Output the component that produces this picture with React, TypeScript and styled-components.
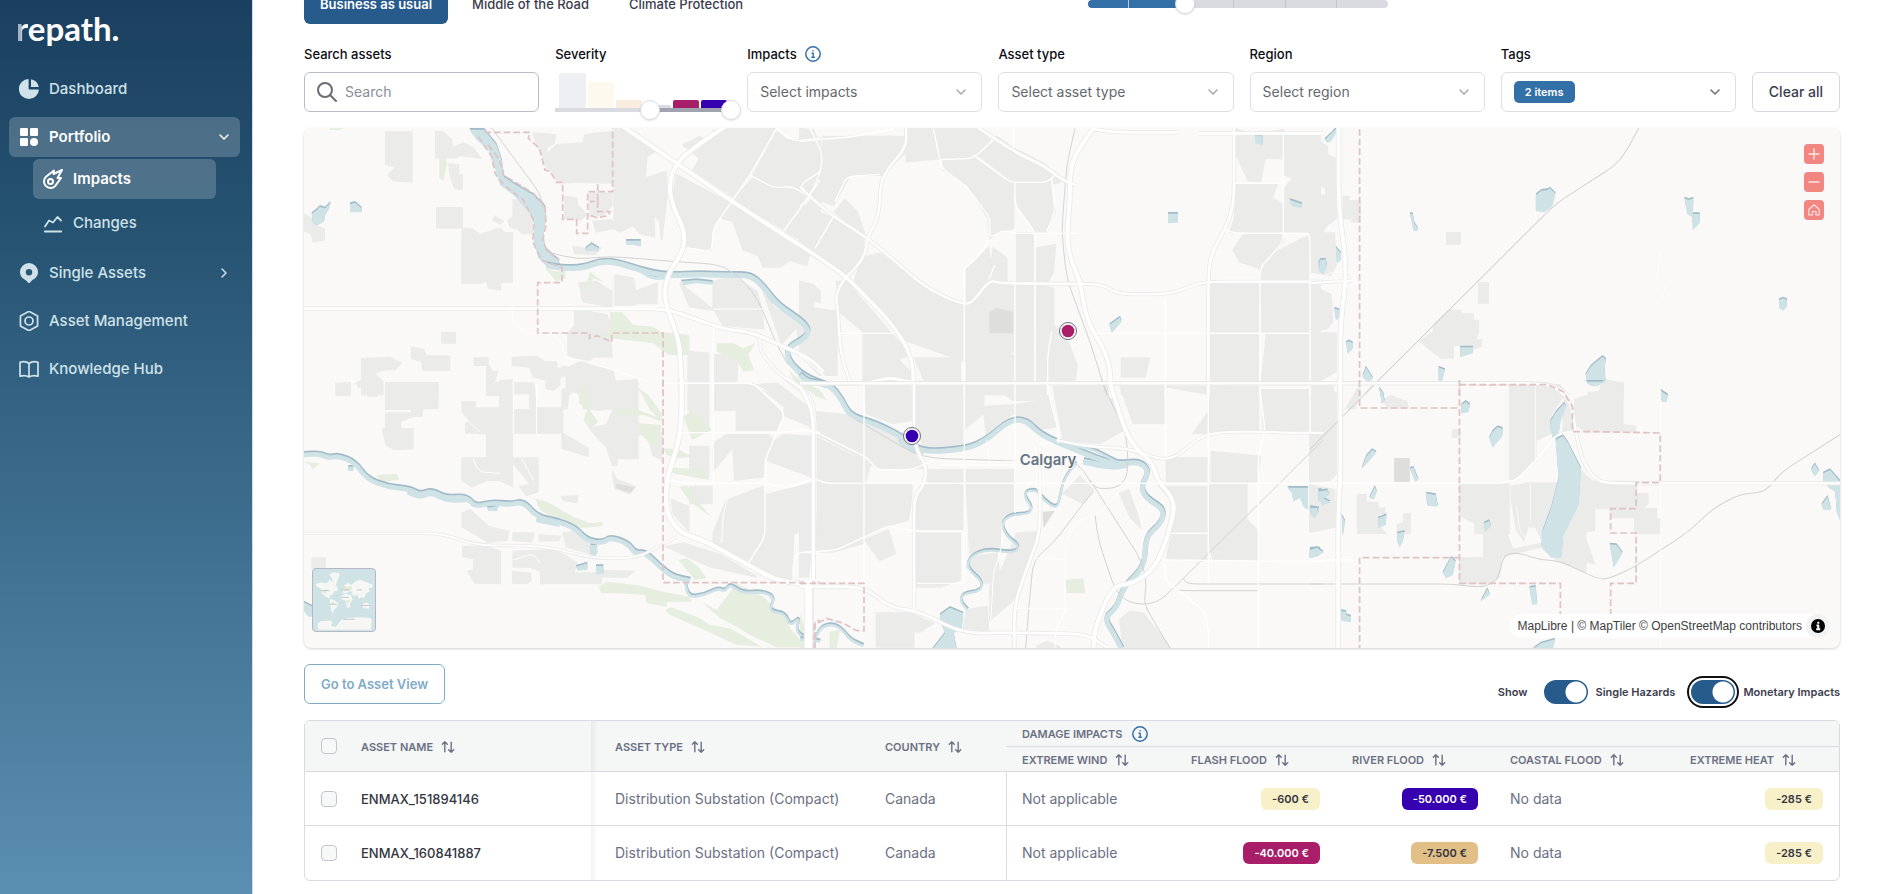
import React from 'react';
import styled, { createGlobalStyle, css } from 'styled-components';

/* ---------- global ---------- */

const GlobalStyle = createGlobalStyle`
  *, *::before, *::after { box-sizing: border-box; }
  body {
    margin: 0;
    background: #fff;
    color: #3b3d4d;
    font-family: Inter, "Liberation Sans", sans-serif;
    font-size: 14px;
    line-height: 20px;
    overflow-x: hidden;
  }
  button, input, select { font: inherit; color: inherit; margin: 0; }
`;

const Page = styled.div`
  display: flex;
  min-height: 100vh;
`;

/* ---------- sidebar ---------- */

const Sidebar = styled.aside`
  flex: 0 0 253px;
  padding: 12px 12px 0 9px;
  border-right: 1px solid #d5d9e0;
  background: linear-gradient(#1b3f60, #24506f 22%, #5b8fb2);
`;

const Logo = styled.a`
  display: block;
  height: 36px;
  margin-bottom: 21px;
  padding-left: 7px;
  color: #fff;
  font-family: Lato, sans-serif;
  font-weight: 700;
  font-size: 33px;
  line-height: 32px;
  text-decoration: none;
`;

const LogoLead = styled.span`
  background: linear-gradient(90deg, rgba(255, 255, 255, 0.6) 40%, #fff 60%);
  background-clip: text;
  -webkit-background-clip: text;
  color: transparent;
`;

const NavList = styled.ul`
  list-style: none;
  margin: 0;
  padding: 0;
  display: flex;
  flex-direction: column;
  gap: 8px;
`;

const SubList = styled(NavList)`
  margin: 2px 24px;
  gap: 4px;
`;

const NavLink = styled.a<{ $active?: boolean }>`
  display: flex;
  align-items: center;
  gap: 10px;
  height: 40px;
  padding: 0 10px;
  border-radius: 6px;
  color: #cfe2e9;
  font-size: 15px;
  font-weight: 500;
  text-decoration: none;
  ${(p) =>
    p.$active &&
    css`
      background: rgba(255, 255, 255, 0.2);
      color: #fff;
      font-weight: 600;
    `}
`;

const NavText = styled.span`
  flex: 1;
`;

/* ---------- icons ---------- */

const Glyph = styled.svg<{ $size?: number }>`
  flex: none;
  display: block;
  width: ${(p) => p.$size ?? 20}px;
  height: ${(p) => p.$size ?? 20}px;
  fill: none;
  stroke: currentColor;
  stroke-width: 2;
  stroke-linecap: round;
  stroke-linejoin: round;
`;

const PieIcon = () => (
  <Glyph viewBox="0 0 20 20">
    <path fill="currentColor" stroke="none" d="M12 0.2A10 10 0 0 1 19.8 8H12Z" />
    <path fill="currentColor" stroke="none" d="M9.6 0A10 10 0 1 0 19.9 10.4H10.6a1 1 0 0 1-1-1Z" />
  </Glyph>
);

const GridIcon = () => (
  <Glyph viewBox="0 0 20 20">
    <g fill="currentColor" stroke="none">
      <rect x="1" y="1" width="8" height="8" rx="1.2" />
      <rect x="11" y="1" width="8" height="8" rx="1.2" />
      <rect x="1" y="11" width="8" height="8" rx="1.2" />
      <circle cx="15" cy="15" r="4" />
    </g>
  </Glyph>
);

const MeteorIcon = () => (
  <Glyph viewBox="2 2 20 20">
    <path d="M21 3l-4.500 8h3.500l-5.891 8.086a6.5 6.5 0 1 1-8.855-9.506L13 3.500l-.5 3.500z" />
    <circle cx="9.5" cy="14.5" r="2.5" />
  </Glyph>
);

const TrendIcon = () => (
  <Glyph viewBox="2 2 20 20">
    <path strokeWidth="1.800" d="M3.800 20.500h16.400M4 15.500l4-6 4 2 4.500-5.500 3.500 3.500" />
  </Glyph>
);

const PinIcon = () => (
  <Glyph viewBox="0 0 20 20">
    <path
      fill="currentColor"
      stroke="none"
      fillRule="evenodd"
      d="M10 0a9 9 0 0 1 9 9c0 4-2.6 6.500-5.800 8.200L10 20.500l-3.200-3.300C3.600 15.500 1 13 1 9a9 9 0 0 1 9-9Zm0 6a3.200 3.200 0 1 0 0 6.400A3.200 3.200 0 0 0 10 6Z"
    />
  </Glyph>
);

const HexIcon = () => (
  <Glyph viewBox="-0.500 -0.500 21 21">
    <path strokeWidth="1.8" d="M10-.2l9 4.900v10.600l-9 4.900-9-4.900V4.700z" />
    <circle strokeWidth="1.8" cx="10" cy="10" r="4.200" />
  </Glyph>
);

const BookIcon = () => (
  <Glyph viewBox="0 0 20 20">
    <path strokeWidth="1.7" d="M10 4.500C8 2.700 4 2.300 1 3.200v14c3-.9 7-.5 9 .8 2-1.300 6-1.700 9-.8v-14c-3-.9-7-.5-9 1.300ZM10 4.500V18" />
  </Glyph>
);

const Chevron = ({ to = 'down' }: { to?: 'down' | 'right' }) => (
  <Glyph $size={12} viewBox="0 0 12 12">
    <path strokeWidth="1.500" d={to === 'down' ? 'M2 4l4 4 4-4' : 'M4 2l4 4-4 4'} />
  </Glyph>
);

const InfoGlyph = styled(Glyph)`
  color: #3470a8;
`;

const InfoIcon = () => (
  <InfoGlyph $size={16} viewBox="0 0 16 16" role="img" aria-label="Info">
    <circle strokeWidth="1.500" cx="8" cy="8" r="7.200" />
    <path strokeWidth="1.400" d="M7 7.200h1.200V11M6.800 11.300h2.600M8 4.600v.3" />
  </InfoGlyph>
);

const SortIcon = () => (
  <Glyph $size={14} viewBox="0 0 14 14">
    <path strokeWidth="1.400" d="M3.800 11.800V1.700M1.300 4.200l2.500-2.500 2.500 2.500M10.200 2.200v10.100M7.700 9.800l2.500 2.500 2.500-2.500" />
  </Glyph>
);

/* ---------- scenario row ---------- */

const Main = styled.main`
  flex: 1;
  min-width: 0;
  padding: 0 44px 12px 51px;
`;

const ScenarioRow = styled.div`
  display: grid;
  grid-template-columns: 784px 1fr;
  align-items: end;
  height: 24px;
`;

const Tabs = styled.div`
  display: flex;
  align-items: flex-end;
  gap: 8px;
  height: 24px;
`;

const Tab = styled.button<{ $active?: boolean }>`
  flex: none;
  height: 40px;
  padding: 0 16px;
  border: 0;
  border-radius: 6px;
  background: ${(p) => (p.$active ? '#275b8b' : 'transparent')};
  color: ${(p) => (p.$active ? '#fff' : '#3b3d4d')};
  font-weight: ${(p) => (p.$active ? 600 : 500)};
  font-size: 13px;
`;

const thumb = css`
  appearance: none;
  pointer-events: auto;
  width: 20px;
  height: 20px;
  border: 1px solid #dcdee3;
  border-radius: 50%;
  background: #fff;
  box-shadow: 0 1px 2px rgba(0, 0, 0, 0.12);
`;

const YearSlider = styled.input`
  appearance: none;
  align-self: start;
  width: 300px;
  height: 8px;
  background:
    linear-gradient(#c3c6cd, #c3c6cd) 40px 0 / 1px 8px no-repeat,
    linear-gradient(#c3c6cd, #c3c6cd) 145px 0 / 1px 8px no-repeat,
    linear-gradient(#c3c6cd, #c3c6cd) 197px 0 / 1px 8px no-repeat,
    linear-gradient(#c3c6cd, #c3c6cd) 248px 0 / 1px 8px no-repeat,
    linear-gradient(#3470a8, #3470a8) 0 0 / 97px 8px no-repeat,
    linear-gradient(#d9dbe0, #d9dbe0);
  border-radius: 4px;
  &::-webkit-slider-thumb { ${thumb} }
`;

/* ---------- filters ---------- */

const Filters = styled.form`
  display: grid;
  grid-template-columns: 1fr 176px repeat(4, 1fr) 88px;
  gap: 16px;
  align-items: end;
  margin: 20px 0 16px;
`;

const Field = styled.div`
  display: flex;
  flex-direction: column;
  gap: 8px;
  min-width: 0;
`;

const FieldLabel = styled.label`
  display: flex;
  align-items: center;
  gap: 8px;
  color: #0c0d12;
  font-size: 13px;
  font-weight: 500;
`;

const Control = styled.div<{ $strong?: boolean; $muted?: boolean }>`
  display: flex;
  align-items: center;
  position: relative;
  height: 40px;
  padding: 0 14px 0 12px;
  gap: 8px;
  border: 1px solid ${(p) => (p.$strong ? '#b9bbc8' : '#dedfe3')};
  border-radius: 6px;
  background: #fff;
  color: ${(p) => (p.$muted ? '#a6a8ad' : '#6b6d73')};
`;

const SearchInput = styled.input`
  flex: 1;
  min-width: 0;
  border: 0;
  outline: 0;
  padding: 0;
  background: none;
  font-size: 14px;
  &::placeholder { color: #8a8d9a; }
`;

const Select = styled.select`
  appearance: none;
  flex: 1;
  min-width: 0;
  height: 38px;
  border: 0;
  padding: 0;
  background: none;
  color: #66686e;
  font-size: 14px;
`;

const MultiSelect = styled.button`
  display: flex;
  align-items: center;
  justify-content: space-between;
  height: 40px;
  padding: 0 14px 0 12px;
  border: 1px solid #dedfe3;
  border-radius: 6px;
  background: #fff;
  color: #6b6d73;
`;

const Chip = styled.span`
  height: 22px;
  padding: 0 11px;
  border-radius: 5px;
  background: #3470a8;
  color: #fff;
  font-size: 11px;
  font-weight: 600;
  line-height: 22px;
`;

const OutlineButton = styled.button<{ $accent?: boolean }>`
  height: 40px;
  padding: 0 ${(p) => (p.$accent ? 16 : 0)}px;
  border: 1px solid ${(p) => (p.$accent ? '#7fabc6' : '#d6d8de')};
  border-radius: 6px;
  background: #fff;
  color: ${(p) => (p.$accent ? '#7fabc6' : '#3b3d4d')};
  font-size: ${(p) => (p.$accent ? 13 : 14)}px;
  font-weight: ${(p) => (p.$accent ? 600 : 500)};
  white-space: nowrap;
`;

const Histogram = styled.div`
  position: relative;
  display: grid;
  grid-template-columns: repeat(6, 1fr);
  gap: 2px;
  align-items: end;
  height: 40px;
  padding: 0 4px 4px;
  background:
    linear-gradient(#a0a4ae, #a0a4ae) 94px 36px / 82px 4px no-repeat,
    linear-gradient(#d9dbe0, #d9dbe0) 0 36px / 176px 4px no-repeat;
`;

const Bar = styled.div<{ $h: number; $c: string }>`
  height: ${(p) => p.$h}px;
  border-radius: 2px 2px 0 0;
  background: ${(p) => p.$c};
`;

const SeverityRange = styled.input`
  appearance: none;
  position: absolute;
  left: -10px;
  bottom: -8px;
  width: 196px;
  height: 20px;
  background: none;
  pointer-events: none;
  &::-webkit-slider-thumb { ${thumb} }
`;

/* ---------- map ---------- */

const MapCard = styled.section`
  position: relative;
  height: 520px;
  border-radius: 8px;
  overflow: hidden;
  background: #faf9f7;
  box-shadow: 0 1px 3px rgba(0, 0, 0, 0.18);
`;

const MapSvg = styled.svg`
  display: block;
  width: 100%;
  height: 100%;
  .land { fill: #ebebea; stroke: #ebebea; stroke-width: 6; stroke-linejoin: miter; }
  .dark { fill: #dededd; }
  .park { fill: #e6eedf; }
  .lakeEdge { fill: #a2bbc8; }
  .lake { fill: #cfe2e6; }
  .riverEdge { fill: none; stroke: #a2bbc8; stroke-linejoin: round; }
  .river { fill: none; stroke: #cfe2e6; stroke-linejoin: round; }
  .casing { fill: none; stroke: #e9e9e8; stroke-linejoin: round; }
  .road { fill: none; stroke: #fff; stroke-linejoin: round; }
  .rail { fill: none; stroke: #d3d3d2; stroke-width: 3; stroke-linejoin: round; }
  .border { fill: none; stroke: #dfc3c5; stroke-width: 5; stroke-dasharray: 20 9; }
`;

const CityLabel = styled.text`
  font: 600 15px Inter, sans-serif;
  fill: #657584;
  stroke: #fbfaf8;
  stroke-width: 2px;
  paint-order: stroke;
`;

const MapTools = styled.div`
  position: absolute;
  top: 16px;
  right: 16px;
  display: grid;
  gap: 8px;
`;

const MapTool = styled.button`
  display: grid;
  place-items: center;
  width: 20px;
  height: 20px;
  padding: 0;
  border: 0;
  border-radius: 4px;
  background: #f28681;
  color: #fde4e2;
`;

const MiniMap = styled.button`
  position: absolute;
  left: 8px;
  bottom: 16px;
  width: 64px;
  height: 64px;
  padding: 0;
  border: 1px solid #b3b7c6;
  border-radius: 4px;
  background: #cfe2e6;
  overflow: hidden;
`;

const Attribution = styled.div`
  position: absolute;
  right: 10px;
  bottom: 10px;
  display: flex;
  align-items: center;
  height: 24px;
  border-radius: 12px;
  padding-left: 8px;
  gap: 4px;
  background: #fff;
  color: #404040;
  font: 12px "Liberation Sans", Arial, sans-serif;
  a { color: inherit; text-decoration: none; }
`;

const InfoToggle = styled.button`
  display: grid;
  place-items: center;
  width: 24px;
  height: 24px;
  padding: 0;
  border: 0;
  border-radius: 50%;
  background: #f2f2f2;
`;

type Line = [string, number];
interface Tile {
  x: number;
  y: number;
  w: number;
  land: string;
  dark?: string;
  park?: string;
  lakes: string;
  rivers: Line[];
  roads: Line[];
  rails: string;
  borders: string;
}

const tiles: Tile[] = [
  {
    x: 300, y: 125, w: 1560,
    land:
      'M258 22H335V170L280 166 265 150 290 125 258 118ZM408 20L430 22 455 45V70L490 55 520 70 540 98 480 90 462 98 408 97ZM448 118L475 120V150L486 152V193L465 190 452 155ZM411 249H486V308H411ZM487 310L515 312 540 330 570 320 600 310 612 324H636V470L600 472V493L565 488 560 465 545 473H487ZM12 268L40 285 45 302 72 312V345L40 350 35 325 12 318ZM640 225L665 230 690 255 700 325 665 325 640 295ZM585 275L608 290 600 296 580 285ZM625 285L645 275 650 310 630 305ZM700 25L765 30 762 55 740 65V90L770 60 850 55 855 30 938 20V173L830 170 790 173 770 165 755 135 735 120 730 95 712 60ZM943 10H985L1110 95 1070 75 1040 95 1035 160 1098 140 1100 210 1085 345 1080 290 1060 265 1063 335 1020 325 1000 300 960 320 943 310ZM1150 60L1200 35 1215 50 1245 30 1240 18 1280 12H1425L1350 150 1300 215 1180 135 1200 100ZM1430 20L1460 45 1520 45 1560 40V175L1520 220 1380 180 1360 150ZM1530 230L1560 200V370L1450 318ZM1360 160L1430 195 1500 200 1515 230 1450 312 1300 222ZM1130 150L1290 235 1240 300 1232 375 1160 365 1150 300 1115 240ZM1250 270L1290 240 1450 325 1530 380 1520 420 1470 405 1440 425 1390 425 1375 390 1330 375 1300 290 1270 280ZM795 215L830 220 832 240 860 270 840 285 795 280ZM868 205H935V240L910 270 870 275ZM880 290L935 285 940 310 890 320ZM820 365L860 372 900 370 885 388 825 385ZM805 625L825 600V560L850 558 920 570 930 600 935 695H880L860 710 805 690ZM838 475L890 470 935 500V545L850 530ZM940 450L1000 460 1005 500 1070 475V535L1010 535 985 545 940 540ZM1140 475L1240 555 1170 545ZM1240 470L1300 455 1370 500 1385 550 1390 610 1270 600 1240 550ZM1390 500L1425 550 1500 595 1445 655ZM1500 490L1540 480 1560 500V530L1510 520ZM426 623H465V653H426ZM186 702L270 698 302 715 285 732 245 735 220 745 248 770V808H186V775H170L186 765ZM336 668L370 674 378 694H448V735H370L366 708 336 700ZM523 699H563V720H523ZM561 727L568 725 576 740 592 740 580 775H561ZM638 698L710 695 735 712 768 712 772 735 790 725 822 730V748L778 755V780L760 795 738 788 740 765 700 755 690 725 638 720ZM800 730L840 712 938 740 945 770 1010 765V808H860L840 790 800 808ZM109 776L150 774V808H109ZM258 775H413V808H258ZM600 767L638 765V808H600ZM1165 680L1225 685V770H1165ZM1245 690L1275 690 1312 690 1310 768H1245ZM1480 560L1535 600 1560 550V700L1500 660Z',
    park:
      'M90 9H132L120 15H90ZM418 98L438 95 440 120 430 168 418 160ZM735 430L770 440 798 435 795 460 770 470ZM870 440L912 472 880 460 860 500 835 482 860 475ZM930 562L965 560 1000 600 1060 605 1080 620 1168 630V690L1105 690 1060 655 930 640 890 640 930 615ZM1250 655L1300 655 1330 670 1365 655 1345 690 1362 735 1330 740 1310 705 1250 680ZM1465 735L1500 765 1560 795V808L1490 780Z',
    lakes:
      'M35 262L50 250 60 240 75 245 92 228 88 245 75 268 72 285 50 298 38 290ZM150 232L165 228 185 245V257H150ZM857 365L875 352 897 365V374H857ZM978 342H1022V360L1000 355H978ZM508 9H553L590 55 605 100 612 150 640 170 700 205 735 240 738 280 730 320 735 365 775 400 782 430 745 424 715 395 703 350 705 300 690 260 640 205 600 175 580 110 565 70 530 40ZM1142 464L1190 460 1238 465V474L1190 470 1150 476Z',
    rivers: [
      ['M740 422L780 430 850 430 900 410 945 412 1010 432 1060 446 1110 452 1200 448 1290 452 1350 450 1390 485 1430 540 1520 600 1525 635 1460 670 1465 710 1510 755 1580 782', 16],
      ['M1015 432L1050 460 1095 460 1110 450M1400 500L1420 535', 9],
    ],
    roads: [
      ['M970 5L1290 225 1560 400', 12],
      ['M1275 5L1200 55 1130 110 1105 180 1120 250 1155 320 1150 380 1100 450 1092 530 1140 650 1145 820', 12],
      ['M10 551H1100L1180 580 1280 615 1350 620 1440 660 1530 700 1570 740', 9],
      ['M1380 640V680L1430 740 1500 795', 6],
      ['M1430 10L1350 150 1240 310 1235 380 1160 368M1430 10L1480 48 1560 40M1350 150L1420 188 1480 185 1525 215 1560 165M1525 215L1450 320M1525 215L1500 180 1560 140', 4],
      ['M636 540V590L675 625H760L790 660V700L850 705 1040 768M1090 775H1360L1400 800M940 440V560M940 545H1100M1240 600V810M1240 552H1390', 3],
    ],
    rails: 'M575 9L720 205 728 250M738 380L830 403 930 394 1130 410 1250 418 1300 440 1360 500 1390 560 1430 660 1465 720',
    borders:
      'M553 22H690L685 40 718 70 735 135 750 138 770 172H788V283H830V325H863V200H938V10M893 178V228L870 230M893 228V260H930L925 272 890 278 868 270M565 60L600 105 610 150 700 205 735 240 738 300 728 345 740 375 778 405M535 35L575 95 585 145 610 178 670 225 703 290 698 350 725 405 786 428V473H713V624H870L868 640 890 632 935 650V624H1089V810',
  },
  {
    x: 300, y: 380, w: 1560,
    land:
      'M109 12H150L148 45H112ZM175 10L230 10V48H205V20H175ZM258 10H413V85H366V108H337L300 125 302 148H338V205L285 208 260 195 248 148 258 145V100H336V87H258ZM561 10L600 8 636 25V40L600 45 561 45ZM600 10H636V160H535L500 110 487 95V66H525V85H600ZM640 10H700L708 85 705 158H638V90H690V40H640ZM790 28L808 30 800 85H712V158H787V30ZM805 10H938V85L900 90 850 85 842 40 805 30ZM940 10H1013V160H1085V240L1060 225 1040 160 1013 165V235H950V255H938L920 200 900 180 870 145 920 135 940 90ZM498 130L520 120 533 158H498ZM787 160L863 205V228L787 205ZM561 160H636V230H561ZM487 235H636V318L600 300 561 300 515 320 487 300ZM640 235H713V310H690L640 250ZM660 320L713 310V335L680 345ZM938 275L950 300 1005 320 990 340 945 325ZM787 350L832 348 830 367 790 360ZM487 400L510 390 565 440 625 455 620 480 565 485 487 440ZM640 460H700L695 485 640 480ZM718 465L780 470 775 480 720 482ZM790 460L830 455 880 500 870 520 800 500ZM489 500L560 500 600 515V610L525 608 505 575 522 570V535L489 530ZM640 515L760 510 800 530 830 550 820 580H903V610H723V575L690 560 640 560ZM638 575L690 580 692 600 680 610H640ZM910 572L1000 575 980 590H910ZM37 535H75V565H37ZM1165 12H1225V140L1200 130 1165 90ZM1245 10L1360 12 1400 50 1450 100 1430 150H1310V90H1245ZM1280 165H1405L1430 190 1395 240 1390 290 1305 300 1300 200 1240 270V190ZM1170 200H1225V290L1170 280ZM1400 200L1450 165 1535 170V290L1400 240ZM1400 345L1535 310V450L1480 460 1475 605 1430 600 1345 545 1395 480V340ZM1115 360L1165 380V450L1120 400ZM1170 320H1235V370H1170ZM1240 460L1280 360 1310 350 1390 320V480L1340 540 1240 490ZM1100 500L1150 490 1260 525 1370 590 1230 560ZM1370 15L1430 10 1535 90V140L1450 105 1455 80Z',
    dark: 'M945 310L1005 322 990 340 950 325Z',
    park:
      'M12 245L60 250 38 268 30 255ZM230 285L290 282 298 300 240 305ZM835 25L858 15 860 60 880 75 865 85 895 125 870 148 850 120 862 90 838 70ZM950 90L1010 88 1080 115 1085 125 1030 105 950 108ZM1015 25L1045 45 1085 100V125L1050 90ZM1015 130L1085 135 1075 200 1050 190 1015 155ZM1090 205L1140 210 1175 230 1130 235 1100 225ZM1100 260L1205 270 1228 300 1195 295 1120 280ZM1150 110L1180 90 1235 150 1175 180ZM1138 320L1160 315 1190 360 1235 412 1170 365ZM705 355L740 365 820 410 870 430 908 425V438L840 445 780 425 720 390ZM1135 540L1160 535 1195 560 1220 595 1185 600ZM895 620L920 605 1010 615 1090 635 1170 650 1175 665H1100V680L1040 670 1035 645 960 640 905 640ZM1095 690L1115 682 1200 715 1230 735 1290 745 1385 800 1310 795 1225 755 1110 705ZM1205 665L1250 690 1310 610 1390 650 1460 715 1470 745 1520 802H1430L1350 765 1310 740 1260 715ZM1500 15L1560 35 1540 42Z',
    lakes: 'M872 490H890L892 515 882 530 872 520ZM828 555L862 545V565L832 567ZM888 553H910V578H888ZM12 662L37 675V705H25L12 690ZM145 255H160V268H145ZM560 378L598 372 590 388H565Z',
    rivers: [
      ['M8 225L60 222 85 235 115 228 165 248 200 298 265 322 330 328 360 345 395 332 435 355 500 350 525 382 575 368 630 375 670 365 710 412 775 425 825 445 860 482 910 490 930 472 985 492 1005 522 1035 517 1080 562 1120 592 1170 602', 14],
      ['M325 335L360 350 395 335 440 360 500 358M710 418L780 432', 18],
      ['M1155 605L1165 653 1215 645 1255 625 1275 635 1290 612 1325 640 1390 635 1425 655 1405 695 1455 700 1470 740 1500 710 1485 765 1560 785', 8],
    ],
    roads: [
      ['M10 460H430L520 495 730 498 880 535 1000 535 1060 510 1130 470', 5],
      ['M1145 -5V130L1130 210 1098 300 1098 400 1140 460 1210 480 1380 575 1440 605 1560 615', 13],
      ['M1460 -5L1520 35 1545 90V450L1530 620', 9],
      ['M1528 610V810', 22],
      ['M1090 10H1360L1455 100 1395 240V470L1345 550M1145 158H1430L1535 150 1560 158M1240 10V310M1100 300L1160 310H1390L1470 322 1545 295M1480 605V540L1500 515 1560 520', 4],
      ['M520 235L535 275 600 280M665 235L700 300M640 0V160M710 10V160M500 120L540 155M640 540L700 520 720 550M1285 350L1270 400 1265 490', 3],
    ],
    rails: 'M0 0',
    borders: 'M1089 0V608H1560M1545 805V725L1560 720',
  },
  {
    x: 800, y: 125, w: 1560,
    land:
      'M0 12L40 15 65 75 50 180 25 215 0 185ZM70 35H315L318 80 245 150 150 150 100 240 30 215 65 120ZM320 10H530L570 45 530 100 420 100 320 110ZM430 105H530L600 155 640 175H490L430 135ZM590 35L640 70 730 115 790 165 770 175H645L540 95ZM105 260L135 225 170 260 195 330 150 300ZM500 180H640V310L600 320 570 340 565 280ZM645 175H750L765 260 740 320 705 320 650 240ZM645 325H700V770H645V500L620 480V400L580 370 570 470 645 475ZM240 385L380 490 490 540 570 475 640 480V680L560 710H500L300 640 250 560 160 480 185 400ZM0 240L100 280 190 335 190 400 140 445 0 350ZM110 470L140 470 330 690 300 700 190 700V620L120 560ZM0 470L40 480V550L110 560V750L60 750 0 690ZM190 700L290 700 330 740V770H190ZM345 700L480 700V770H375ZM500 700L640 690V770H500ZM500 430L565 370 580 460 500 530ZM710 370L765 360 760 440 740 475H710ZM710 480L760 490V600L800 640 830 720 825 765H745L710 770ZM1305 12L1365 30 1450 15V100H1395L1380 170 1345 165 1305 80ZM1455 30L1560 25V320H1455V190L1480 160 1455 150ZM1305 180H1430L1415 220 1450 240V320H1290L1305 280ZM1330 330H1450V350L1380 430 1320 410 1300 375ZM1400 400L1450 370 1530 330V470H1380V430ZM1230 480H1375V620H1230ZM1380 480H1525V620H1385ZM1230 630H1375V770H1230ZM1400 630H1525V770H1385ZM965 700H1047L1035 755H965ZM1530 480H1560V770H1530ZM800 780H925V808H800ZM965 780H1095V808H965ZM1100 785H1375V808H1230ZM345 780H640V808H345Z',
    dark: 'M568 562L590 548 640 560V625H568Z',
    lakes:
      'M1365 28H1388V55L1365 50ZM1104 261H1134V288L1104 290ZM1468 219L1506 232V245L1475 238ZM928 595L960 572 965 585 935 620ZM1555 405L1568 410V435H1557Z',
    rivers: [],
    roads: [
      ['M0 360L140 455 280 600 340 700V820', 10],
      ['M0 185L30 215 100 275 205 340 380 490 490 540 520 530 568 465 600 475 910 477 950 508H1110L1180 480 1225 470H1570', 7],
      ['M530 5L650 85 730 120 790 168 830 180', 8],
      ['M880 10L810 110V230L800 330 810 400 840 465 860 590 930 700 932 820', 12],
      ['M880 12L940 22H1137M1195 25H1570', 8],
      ['M318 5L320 70 240 155V270L200 340 195 400 105 490 115 570 122 690 150 770', 7],
      ['M1302 5V240L1275 315 1230 390 1225 475V810', 8],
      ['M0 776H200L270 755 340 775H1570', 8],
      ['M0 50L40 45 160 35 280 12M30 10L65 80V130L30 215 0 245M100 275L45 370M105 230L140 155 240 148M400 10L425 130 500 185 570 280 568 340 610 315 640 325H830M420 104L520 100 580 45M520 90L630 172H740L765 150M645 170V240L705 320V770M493 430V810M645 320V770M755 160L765 260 740 320M568 340L540 390 495 430', 4],
      ['M1275 315L1310 325H1530V810M1450 30V350L1380 430V810M1300 175H1450M885 625H1530M1096 520V810M1225 480V810M755 620L743 690V810M640 70V10M120 625H280M0 690L80 760M565 465L585 420', 4],
    ],
    rails: 'M825 10L800 120 785 320 800 460 870 650 920 810',
    borders: 'M0 0',
  },
  {
    x: 800, y: 380, w: 1560,
    land:
      'M0 90L40 95 190 110 330 200 370 265H230L150 215 45 160ZM45 170L210 255 195 310H45ZM195 15H335V120L280 130 200 100ZM345 15H490V195L370 200 350 140ZM500 15H550V100L490 150 500 15ZM550 80L640 75 750 60 770 140 700 150 640 100 560 160ZM560 10H735L750 60 640 60ZM760 20H925L970 150 900 190 790 180ZM960 15H1095V130H1000ZM1230 15L1375 30V150L1260 155 1180 160 1230 90ZM1385 30H1525V155H1390ZM1540 15H1560V155H1540ZM50 315H190V490L100 515H50ZM195 315H335V340L325 420 265 435 195 470ZM350 340L380 315H490V450L350 450ZM500 315H640V400L600 430V500L510 520ZM350 460H480V600L420 620H350ZM195 480L265 450 285 520 240 540ZM0 330L35 330V590H0ZM510 530L590 520 600 600 555 610 500 560ZM610 560L650 460 720 455 690 540 640 660 570 720V620ZM500 690L560 680 565 750H490ZM230 700L330 700 400 730 360 755 230 755ZM230 760H340V800H230ZM1100 235H1225V305H1100ZM1235 215L1380 230 1370 305H1235ZM1080 320H1225V455H1110L1125 370ZM1230 315H1340V420L1370 450V540H1240L1230 500ZM1115 465H1225V540H1100ZM960 720L990 695 1030 700 1110 802H970ZM790 340L840 290 880 330 850 370ZM960 340L985 330 1010 400 1020 440 990 410ZM380 270L490 270V305L385 310ZM500 270H640V305H500ZM310 225L370 250 330 265ZM710 800L740 785 780 802Z',
    dark: 'M728 395L765 392 730 445Z',
    park: 'M0 15L60 30 80 60 50 50ZM795 600L850 595 855 640 800 640ZM0 700L15 750V805H0ZM88 755L120 750 110 805H88Z',
    lakes:
      'M420 700L450 678 490 695 485 742 460 755 470 803H397L435 755 420 720ZM1462 318L1524 318V385L1510 375 1500 350 1480 360 1475 335ZM1530 375L1558 380 1545 410 1532 400ZM1530 500H1560V520L1528 530ZM1555 325H1565V360H1555Z',
    rivers: [
      ['M0 -15L20 5 90 15 125 60 150 110 230 132 320 180 365 218 500 208 560 180 630 120 680 122 720 165 820 208 940 255 1020 244 1048 278 1022 320 1037 355 1092 388 1085 430 1035 472 1035 560 970 622 950 685 912 715 940 760 965 808', 15],
      ['M300 180L335 210 370 220M850 245L930 262 980 255', 18],
      ['M800 195L880 208 920 230 950 245', 6],
      ['M828 250L790 300 780 350 770 388 730 360 712 332 682 332 672 350 695 380 690 402 630 405 603 430 620 470 660 500 640 520 560 508 510 530 500 565 548 605 540 635 490 640 480 665 503 690', 7],
      ['M0 778L45 780 60 745 90 733 120 742 150 780 190 798', 8],
    ],
    roads: [
      ['M0 10H1570', 7],
      ['M342 10V200L382 260 370 320 342 350V690', 8],
      ['M930 5L945 60 990 190 1060 250 1070 300 1125 360 1115 430 1070 560 1000 612 940 615 885 740 880 810', 12],
      ['M770 180L860 200 990 205 1080 240 1130 230 1200 170 1260 155H1410L1450 158H1570', 6],
      ['M0 20L40 90V600', 10],
      ['M25 600V810', 22],
      ['M0 620H195L270 683 350 692 490 760 640 758 860 762 920 802', 8],
      ['M720 190V460L690 540 643 670V805', 8],
      ['M0 145L45 155 205 235 230 270 340 268 400 240M0 310L45 295 75 310H1560M192 10V610M493 10V610M645 10V400M740 5L755 80 775 150V190M0 518L110 510 265 437 340 453H490M1380 30L1395 150 1375 230V810M1225 10V610M1115 460H1225M1090 540L1570 545M1095 550V600L1210 690 1225 740V810M1530 20V160M1096 10V230', 4],
      ['M350 610H490M610 470L600 520 580 580 575 685 568 750M645 685H790M700 535L790 538M795 700V490L830 425 900 400 960 330M795 690L765 760V805M420 245H700M420 255H690M560 180L570 260M712 190H760M728 190V330M712 200V330', 3],
    ],
    rails:
      'M170 120L340 220 400 235 640 243M905 0L930 60 980 160 985 280 960 320 910 328 880 320 850 270 828 252M870 300L1030 550 1040 620 1030 670 1110 805M885 405L895 480 945 630 990 672H1070L1130 615 1570 180M880 335L850 370 760 490 700 540 685 700 677 805M1150 595L1160 612H1570M1130 628L1140 632H1375',
    borders: 'M0 610H192V752H170L130 730 80 715 43 735V805',
  },
  {
    x: 1310, y: 125, w: 1568,
    land:
      'M0 30L50 65V90L72 100 75 280 50 300 35 322H0V220L50 210 45 185 0 175ZM0 325H70L75 420 60 450 0 440ZM0 480L60 510 65 590 50 610 0 620ZM0 625H75V740L30 765H0ZM98 215H112V228H145V290H122V280H98ZM398 324H436V357H398ZM491 474H517V533H491ZM360 600L405 555 436 558V568H473V588H488V620L480 645H497V663L475 672 436 660H415V698H380L345 670 320 648 360 620ZM581 780H725L745 808H581ZM860 765L872 773H908V808H810L845 798ZM0 780H65L70 808H0Z',
    lakes:
      'M42 40L62 20 72 9H76V20L60 45 50 48ZM290 262L298 262 303 290 313 305V314L300 312ZM656 205L672 192 690 190 697 185 713 202 703 240 680 257 656 254ZM1087 215L1100 220 1113 215 1112 262H1132V290L1112 310 1109 270 1095 262ZM75 362L90 380V400L78 410ZM28 400L45 398 50 420 38 445 26 430ZM70 545L85 550 88 575 75 580ZM104 650L112 643 125 650 124 668 110 682ZM152 750L162 722 183 755 170 770ZM373 722L392 730 382 770H374ZM436 662H473V680L436 692ZM1362 520L1374 515 1385 520V540L1374 552 1362 545ZM800 745L815 720 835 702 850 690 860 700 855 725 858 765 825 780 805 770ZM200 785L216 808H205ZM1018 792L1040 806H1020Z',
    rivers: [],
    roads: [
      ['M83 5V240L103 400V480L88 600V815', 11],
      ['M0 475L60 470 120 468', 6],
      ['M0 775H660L710 780 750 812', 7],
      ['M45 450L100 430 140 470 100 490 60 440M50 770L90 730 130 770M1018 380L1005 470M1035 475L1020 530', 2],
    ],
    rails: 'M955 9L915 85 885 122 730 225 700 250 160 806',
    borders: 'M144 12V810M434 810V779H680L715 788 745 812',
  },
  {
    x: 1310, y: 380, w: 1568,
    land:
      'M581 12L655 15V200L655 240 600 290 581 300ZM657 15L700 15 740 40 700 100 698 160 657 180ZM740 60L765 90 760 150 735 155ZM770 60L810 45V38H840L850 0 908 10V135L945 140V155L800 155 770 130ZM215 60L235 48 280 65 285 83H225ZM415 150H434V170H415ZM435 312H580V460L480 460V430L435 405ZM505 462H570L590 508 680 490 665 460 655 440H640L630 310H715V500L730 530 800 545V575L725 545 670 500 555 530 550 590 520 610H435V535L505 533ZM780 265L820 305H945V385H825V450L800 455V480L825 550 730 525 735 480 780 370ZM873 387H1005V415L1016 420V460H944V412H873ZM948 342H980V370L965 385H948ZM139 345H162V368H196V385H216V400H200V440L217 459H139ZM273 402H290V460H255V435L273 428ZM0 12L75 40V280L60 300 0 305ZM0 315L70 330 75 440 0 455ZM105 85L140 25 144 40 130 85ZM580 320L640 310 635 430 620 480 600 450Z',
    dark: 'M244 234H290V306H244Z',
    lakes:
      'M698 120L715 90 738 65 743 75 725 130 722 165 705 170 697 140ZM713 175L735 163 750 185 787 262 780 370 735 465 730 528H700L672 495 675 450 700 380 722 290ZM202 20L212 35 217 60 208 67ZM440 70L452 60 465 70 460 92 440 95ZM520 170L530 150 545 136 560 142 558 165 530 198ZM163 225L180 205 193 212 175 235 150 262ZM290 262L300 257 315 295 305 300ZM337 335L365 340 371 375 340 372ZM172 350L188 315 194 330 186 353ZM198 410L222 400 220 430 198 440ZM253 455L275 450 270 480 260 497 253 480ZM505 425L520 418 525 435 508 452ZM870 488L890 490 908 515 882 558 875 520ZM385 575L410 527 423 540 415 580 395 590ZM495 660L515 622 522 640ZM637 618L655 614 660 668 645 670ZM90 688L105 690V700L119 705V722L92 718ZM647 803L670 785 712 773 705 803ZM0 505L20 498 40 512 20 525 0 530ZM0 380L20 378 25 395 10 408ZM25 330L50 325 55 340 40 350 60 362 35 372ZM1018 27L1040 42 1035 62 1020 60ZM1455 265L1466 247 1478 270 1465 285ZM1490 275L1510 265 1540 300V420L1530 395 1525 330 1508 320 1490 300ZM1485 370L1503 345 1513 385 1490 385ZM800 0H855L835 13 815 12ZM92 400L102 420 95 465Z',
    rivers: [],
    roads: [
      ['M88 -5V300L82 400V810', 11],
      ['M0 10H660L715 20 760 70 770 150 790 240 825 295 860 310H1560', 7],
      ['M0 310H560L600 300 655 240 720 160 760 155M0 545L60 540H130', 4],
      ['M581 300V460L590 505M655 15V240M640 310V430M600 380L610 460 635 480M60 540L85 510 110 545 90 570M1018 0V810M60 290L88 340M581 600V810', 2],
    ],
    rails:
      'M200 0L0 208M0 612H420L490 622 530 612 550 585 558 540 575 520 610 520 660 537 730 545 780 570 840 598 870 595 940 563 1100 455 1170 385 1250 342 1310 338 1335 320 1370 275 1545 160',
    borders: 'M144 0V84H434M434 0V610H727V705M434 14H690L735 35 762 80V155L830 155 1017 159V308H947V386H873V459H947V610H873V705M434 533H144V805',
  },
];

/** Rounds the corners of an absolute M/L/H/V path; r is the longest cut at a corner. */
function soften(d: string, r: number): string {
  const lines: [number, number][][] = [];
  let x = 0;
  let y = 0;
  for (const part of d.match(/[MLHV][^MLHV]*/g) ?? []) {
    const cmd = part[0];
    const n = (part.slice(1).match(/-?[\d.]+/g) ?? []).map(Number);
    if (cmd === 'M') lines.push([]);
    const line = lines[lines.length - 1];
    if (cmd === 'H' || cmd === 'V') {
      if (cmd === 'H') x = n[0];
      else y = n[0];
      line.push([x, y]);
    } else {
      for (let i = 0; i + 1 < n.length; i += 2) {
        x = n[i];
        y = n[i + 1];
        line.push([x, y]);
      }
    }
  }
  const toward = (a: [number, number], b: [number, number]) => {
    const len = Math.hypot(b[0] - a[0], b[1] - a[1]) || 1;
    const k = Math.min(r, len / 2) / len;
    return `${(a[0] + (b[0] - a[0]) * k).toFixed(1)} ${(a[1] + (b[1] - a[1]) * k).toFixed(1)}`;
  };
  return lines
    .map((p) =>
      p
        .map((pt, i) => {
          if (i === 0) return `M${pt[0]} ${pt[1]}`;
          if (i === p.length - 1) return `L${pt[0]} ${pt[1]}`;
          return `L${toward(pt, p[i - 1])}Q${pt[0]} ${pt[1]} ${toward(pt, p[i + 1])}`;
        })
        .join(''),
    )
    .join('');
}

const World = () => (
  <svg viewBox="38 566 190 190" width="62" height="62" aria-hidden="true">
    <path
      fill="#f6f7f4"
      d="M48 612L62 607 80 610 90 598 96 606 104 606 116 630 104 634 98 644 90 648 88 656 76 650 66 640 60 624 48 620ZM88 584L98 576 118 578 120 586 114 598 108 616 100 608 96 594ZM90 658L100 660 116 670 110 684 102 692 98 704 94 690 90 674ZM128 640L130 630 138 622 134 616 146 608 156 614 168 604 182 598 200 606 222 614 220 622 208 626 212 636 200 640 196 654 186 652 180 658 172 644 164 650 156 642 160 636 148 634 140 640ZM126 648L138 642 154 646 160 660 152 670 150 684 142 684 138 664 126 658ZM188 676L202 668 214 678 208 688 192 686ZM52 732L62 726 92 724 98 732 92 740 108 744 124 722 146 716 178 714 214 716 218 722 216 752H54Z"
    />
    <path fill="#e4ead9" d="M60 632L82 628 78 642ZM94 668L104 668 98 680ZM130 622L158 618 155 632 134 634ZM138 662L152 660 146 676Z" />
    <path stroke="#c6c9c9" strokeWidth="3" d="M62 632H88M124 630H148M172 630H188M126 653H148M88 674H112M184 678H216M132 720H166" />
  </svg>
);

const CalgaryMap = () => (
  <MapSvg viewBox="304 128 1536 520" preserveAspectRatio="xMidYMid slice" role="img" aria-label="Map of Calgary">
    {(['ground', 'water', 'ways'] as const).map((layer) => (
      <g key={layer}>
        {tiles.map((t) => (
          <g
            key={`${t.x}-${t.y}`}
            transform={`translate(${t.x} ${t.y}) scale(${(t.w === 1560 ? 520 : 540) / t.w} ${1 / 3})`}
          >
            {layer === 'ground' && (
              <>
                <path className="land" d={t.land} />
                {t.park && <path className="park" d={t.park} />}
                {t.dark && <path className="dark" d={t.dark} />}
              </>
            )}
            {layer === 'water' && (
              <>
                <path className="lakeEdge" d={t.lakes} />
                <path className="lake" d={t.lakes} transform="translate(0 5)" />
                {t.rivers.map(([d, w]) => (
                  <path key={`e${d}`} className="riverEdge" d={soften(d, 99)} strokeWidth={w} transform="translate(1 -5)" />
                ))}
                {t.rivers.map(([d, w]) => (
                  <path key={d} className="river" d={soften(d, 99)} strokeWidth={w} />
                ))}
              </>
            )}
            {layer === 'ways' && (
              <>
                <path className="rail" d={soften(t.rails, 40)} />
                {t.roads.filter(([, w]) => w > 4).map(([d, w]) => (
                  <path key={`c${d}`} className="casing" d={soften(d, 60)} strokeWidth={w + 5} />
                ))}
                {t.roads.map(([d, w]) => (
                  <path key={d} className="road" d={soften(d, w > 4 ? 60 : 20)} strokeWidth={w} />
                ))}
                <path className="border" d={t.borders} />
              </>
            )}
          </g>
        ))}
      </g>
    ))}
    <CityLabel x="1048" y="465" textAnchor="middle">Calgary</CityLabel>
    {[
      { x: 1068, y: 331, c: '#a91e68' },
      { x: 912, y: 436, c: '#3600b0' },
    ].map((m) => (
      <g key={m.c}>
        <circle cx={m.x} cy={m.y} r="8.500" fill="#fff" stroke="#6b7080" />
        <circle cx={m.x} cy={m.y} r="6.300" fill={m.c} />
      </g>
    ))}
  </MapSvg>
);

/* ---------- table toolbar ---------- */

const Toolbar = styled.div`
  display: flex;
  justify-content: space-between;
  align-items: flex-end;
  margin: 16px 0;
`;

const Toggles = styled.div`
  display: flex;
  align-items: center;
  gap: 16px;
  color: #3b3d4d;
  font-size: 11px;
  font-weight: 600;
`;

const ToggleLabel = styled.label`
  display: flex;
  align-items: center;
  gap: 8px;
`;

const Switch = styled.input<{ $ring?: boolean }>`
  appearance: none;
  width: 44px;
  height: 24px;
  border-radius: 12px;
  background: radial-gradient(circle at 32px 12px, #fff 10px, #275b8b 11px);
  ${(p) =>
    p.$ring &&
    css`
      outline: 2px solid #101014;
      outline-offset: 2px;
    `}
`;

/* ---------- table ---------- */

const TableFrame = styled.div`
  border: 1px solid #d9dbe1;
  border-radius: 6px;
  overflow: hidden;
`;

const Table = styled.table`
  width: 100%;
  table-layout: fixed;
  border-collapse: separate;
  border-spacing: 0;
  text-align: left;
`;

const edge = css<{ $edge?: 'shadow' | 'line' }>`
  ${(p) => p.$edge === 'shadow' && 'background-image: linear-gradient(90deg, rgba(0, 0, 0, 0.05), transparent 7px); padding-left: 24px;'}
  ${(p) => p.$edge === 'line' && 'border-left: 1px solid #d9dbe1; padding-left: 15px;'}
`;

const Th = styled.th<{ $edge?: 'shadow' | 'line'; $group?: boolean }>`
  height: ${(p) => (p.$group ? 26 : 25)}px;
  padding: 0 16px;
  border-bottom: 1px solid #d9dbe1;
  background-color: #f5f7f7;
  color: #6b7083;
  font-size: 11px;
  font-weight: 600;
  line-height: 16px;
  white-space: nowrap;
  ${edge}
`;

const HeadRow = styled.div`
  display: flex;
  align-items: center;
  gap: 10px;
`;

const SortButton = styled.button`
  display: inline-flex;
  align-items: center;
  gap: 8px;
  padding: 0;
  border: 0;
  background: none;
  vertical-align: middle;
`;

const Td = styled.td<{ $edge?: 'shadow' | 'line'; $name?: boolean; $right?: boolean }>`
  height: 54px;
  padding: 0 16px;
  border-bottom: 1px solid #d9dbe1;
  color: ${(p) => (p.$name ? '#33353f' : '#6b7083')};
  font-size: ${(p) => (p.$name ? 13 : 14)}px;
  font-weight: ${(p) => (p.$name ? 500 : 400)};
  text-align: ${(p) => (p.$right ? 'right' : 'left')};
  white-space: nowrap;
  ${edge}
  tr:last-child > & { border-bottom: 0; }
`;

const Check = styled.input`
  appearance: none;
  display: block;
  width: 16px;
  height: 16px;
  border: 1px solid #c3c6cd;
  border-radius: 4px;
  background: #f7f8f8;
`;

const tones = {
  low: ['#f8f0c9', '#33353f'],
  mid: ['#e3bf88', '#33353f'],
  high: ['#a91e68', '#fff'],
  extreme: ['#3600b0', '#fff'],
};

const Pill = styled.span<{ $tone: keyof typeof tones }>`
  display: inline-block;
  height: 22px;
  padding: 0 11px;
  border-radius: 6px;
  background: ${(p) => tones[p.$tone][0]};
  color: ${(p) => tones[p.$tone][1]};
  font-size: 11px;
  font-weight: 600;
  line-height: 22px;
  vertical-align: middle;
`;

const Sortable = ({ children }: { children: React.ReactNode }) => (
  <SortButton type="button">
    {children}
    <SortIcon />
  </SortButton>
);

type Value = [keyof typeof tones, string];
const rows: { name: string; flash: Value; river: Value; heat: Value }[] = [
  { name: 'ENMAX_151894146', flash: ['low', '-600 €'], river: ['extreme', '-50.000 €'], heat: ['low', '-285 €'] },
  { name: 'ENMAX_160841887', flash: ['high', '-40.000 €'], river: ['mid', '-7.500 €'], heat: ['low', '-285 €'] },
];

const columns = [40, 246, 278, 137, 169, 161, 158, 180, 165];

const severity: [number, string][] = [
  [35, '#eeeff2'],
  [26, '#fdf9ef'],
  [8, '#f9ede0'],
  [3, '#d9dbe3'],
  [8, '#a91e68'],
  [8, '#3600b0'],
];

const selects = [
  { id: 'impacts', label: 'Impacts', text: 'Select impacts', info: true },
  { id: 'type', label: 'Asset type', text: 'Select asset type' },
  { id: 'region', label: 'Region', text: 'Select region' },
];

export default function App() {
  return (
    <Page>
      <GlobalStyle />
      <Sidebar>
        <Logo href="#" aria-label="repath.">
          <LogoLead>r</LogoLead>epath.
        </Logo>
        <nav>
          <NavList>
            <li><NavLink href="#"><PieIcon /><NavText>Dashboard</NavText></NavLink></li>
            <li>
              <NavLink href="#" $active><GridIcon /><NavText>Portfolio</NavText><Chevron /></NavLink>
              <SubList>
                <li><NavLink href="#" $active><MeteorIcon /><NavText>Impacts</NavText></NavLink></li>
                <li><NavLink href="#"><TrendIcon /><NavText>Changes</NavText></NavLink></li>
              </SubList>
            </li>
            <li><NavLink href="#"><PinIcon /><NavText>Single Assets</NavText><Chevron to="right" /></NavLink></li>
            <li><NavLink href="#"><HexIcon /><NavText>Asset Management</NavText></NavLink></li>
            <li><NavLink href="#"><BookIcon /><NavText>Knowledge Hub</NavText></NavLink></li>
          </NavList>
        </nav>
      </Sidebar>

      <Main>
        <ScenarioRow>
          <Tabs>
            <Tab type="button" $active>Business as usual</Tab>
            <Tab type="button">Middle of the Road</Tab>
            <Tab type="button">Climate Protection</Tab>
          </Tabs>
          <YearSlider type="range" aria-label="Year" min={0} max={100} defaultValue={31} />
        </ScenarioRow>

        <Filters>
          <Field>
            <FieldLabel htmlFor="search">Search assets</FieldLabel>
            <Control $strong>
              <Glyph viewBox="0 0 20 20">
                <circle cx="8" cy="8" r="7" />
                <path d="M13.200 13.200L19 19" />
              </Glyph>
              <SearchInput id="search" placeholder="Search" size={10} />
            </Control>
          </Field>
          <Field>
            <FieldLabel htmlFor="sev-min">Severity</FieldLabel>
            <Histogram>
              {severity.map(([h, c]) => <Bar key={c} $h={h} $c={c} />)}
              <SeverityRange id="sev-min" type="range" min={0} max={100} defaultValue={54} />
              <SeverityRange aria-label="Maximum severity" type="range" min={0} max={100} defaultValue={100} />
            </Histogram>
          </Field>
          {selects.map((s) => (
            <Field key={s.id}>
              <FieldLabel htmlFor={s.id}>{s.label}{s.info && <InfoIcon />}</FieldLabel>
              <Control $muted>
                <Select id={s.id}><option>{s.text}</option></Select>
                <Chevron />
              </Control>
            </Field>
          ))}
          <Field>
            <FieldLabel htmlFor="tags">Tags</FieldLabel>
            <MultiSelect id="tags" type="button" aria-haspopup="listbox">
              <Chip>2 items</Chip>
              <Chevron />
            </MultiSelect>
          </Field>
          <OutlineButton type="button">Clear all</OutlineButton>
        </Filters>

        <MapCard>
          <CalgaryMap />
          <MapTools>
            <MapTool type="button" aria-label="Zoom in">
              <Glyph $size={12} viewBox="0 0 12 12"><path strokeWidth="1.500" d="M6 1v10M1 6h10" /></Glyph>
            </MapTool>
            <MapTool type="button" aria-label="Zoom out">
              <Glyph $size={12} viewBox="0 0 12 12"><path strokeWidth="1.500" d="M1 6h10" /></Glyph>
            </MapTool>
            <MapTool type="button" aria-label="Reset view">
              <Glyph $size={12} viewBox="0 0 12 12"><path strokeWidth="1.200" d="M.8 5.500L6 .8l5.200 4.700V11H8V7.500H4.500V11H.8Z" /></Glyph>
            </MapTool>
          </MapTools>
          <MiniMap type="button" aria-label="Overview map"><World /></MiniMap>
          <Attribution>
            <span>MapLibre | <a href="#">© MapTiler</a> <a href="#">© OpenStreetMap contributors</a></span>
            <InfoToggle type="button" aria-label="Toggle attribution">
              <svg width="14" height="14" viewBox="0 0 14 14">
                <circle cx="7" cy="7" r="7" fill="#000" />
                <path stroke="#fff" strokeWidth="2" d="M5.500 6.500H8M7.300 6v4M5.200 10.300h4M6.300 3.700h2" />
              </svg>
            </InfoToggle>
          </Attribution>
        </MapCard>

        <Toolbar>
          <OutlineButton type="button" $accent>Go to Asset View</OutlineButton>
          <Toggles>
            <span>Show</span>
            <ToggleLabel><Switch type="checkbox" role="switch" defaultChecked />Single Hazards</ToggleLabel>
            <ToggleLabel><Switch type="checkbox" role="switch" defaultChecked $ring />Monetary Impacts</ToggleLabel>
          </Toggles>
        </Toolbar>

        <TableFrame>
          <Table>
            <colgroup>
              {columns.map((w, i) => <col key={i} width={w} />)}
            </colgroup>
            <thead>
              <tr>
                <Th rowSpan={2}><Check type="checkbox" aria-label="Select all" /></Th>
                <Th rowSpan={2}><Sortable>ASSET NAME</Sortable></Th>
                <Th rowSpan={2} $edge="shadow"><Sortable>ASSET TYPE</Sortable></Th>
                <Th rowSpan={2}><Sortable>COUNTRY</Sortable></Th>
                <Th colSpan={5} $group><HeadRow>DAMAGE IMPACTS<InfoIcon /></HeadRow></Th>
              </tr>
              <tr>
                {['EXTREME WIND', 'FLASH FLOOD', 'RIVER FLOOD', 'COASTAL FLOOD', 'EXTREME HEAT'].map((h) => (
                  <Th key={h}><Sortable>{h}</Sortable></Th>
                ))}
              </tr>
            </thead>
            <tbody>
              {rows.map((r) => (
                <tr key={r.name}>
                  <Td><Check type="checkbox" aria-label={`Select ${r.name}`} /></Td>
                  <Td $name>{r.name}</Td>
                  <Td $edge="shadow">Distribution Substation (Compact)</Td>
                  <Td>Canada</Td>
                  <Td $edge="line">Not applicable</Td>
                  <Td $right><Pill $tone={r.flash[0]}>{r.flash[1]}</Pill></Td>
                  <Td $right><Pill $tone={r.river[0]}>{r.river[1]}</Pill></Td>
                  <Td>No data</Td>
                  <Td $right><Pill $tone={r.heat[0]}>{r.heat[1]}</Pill></Td>
                </tr>
              ))}
            </tbody>
          </Table>
        </TableFrame>
      </Main>
    </Page>
  );
}
